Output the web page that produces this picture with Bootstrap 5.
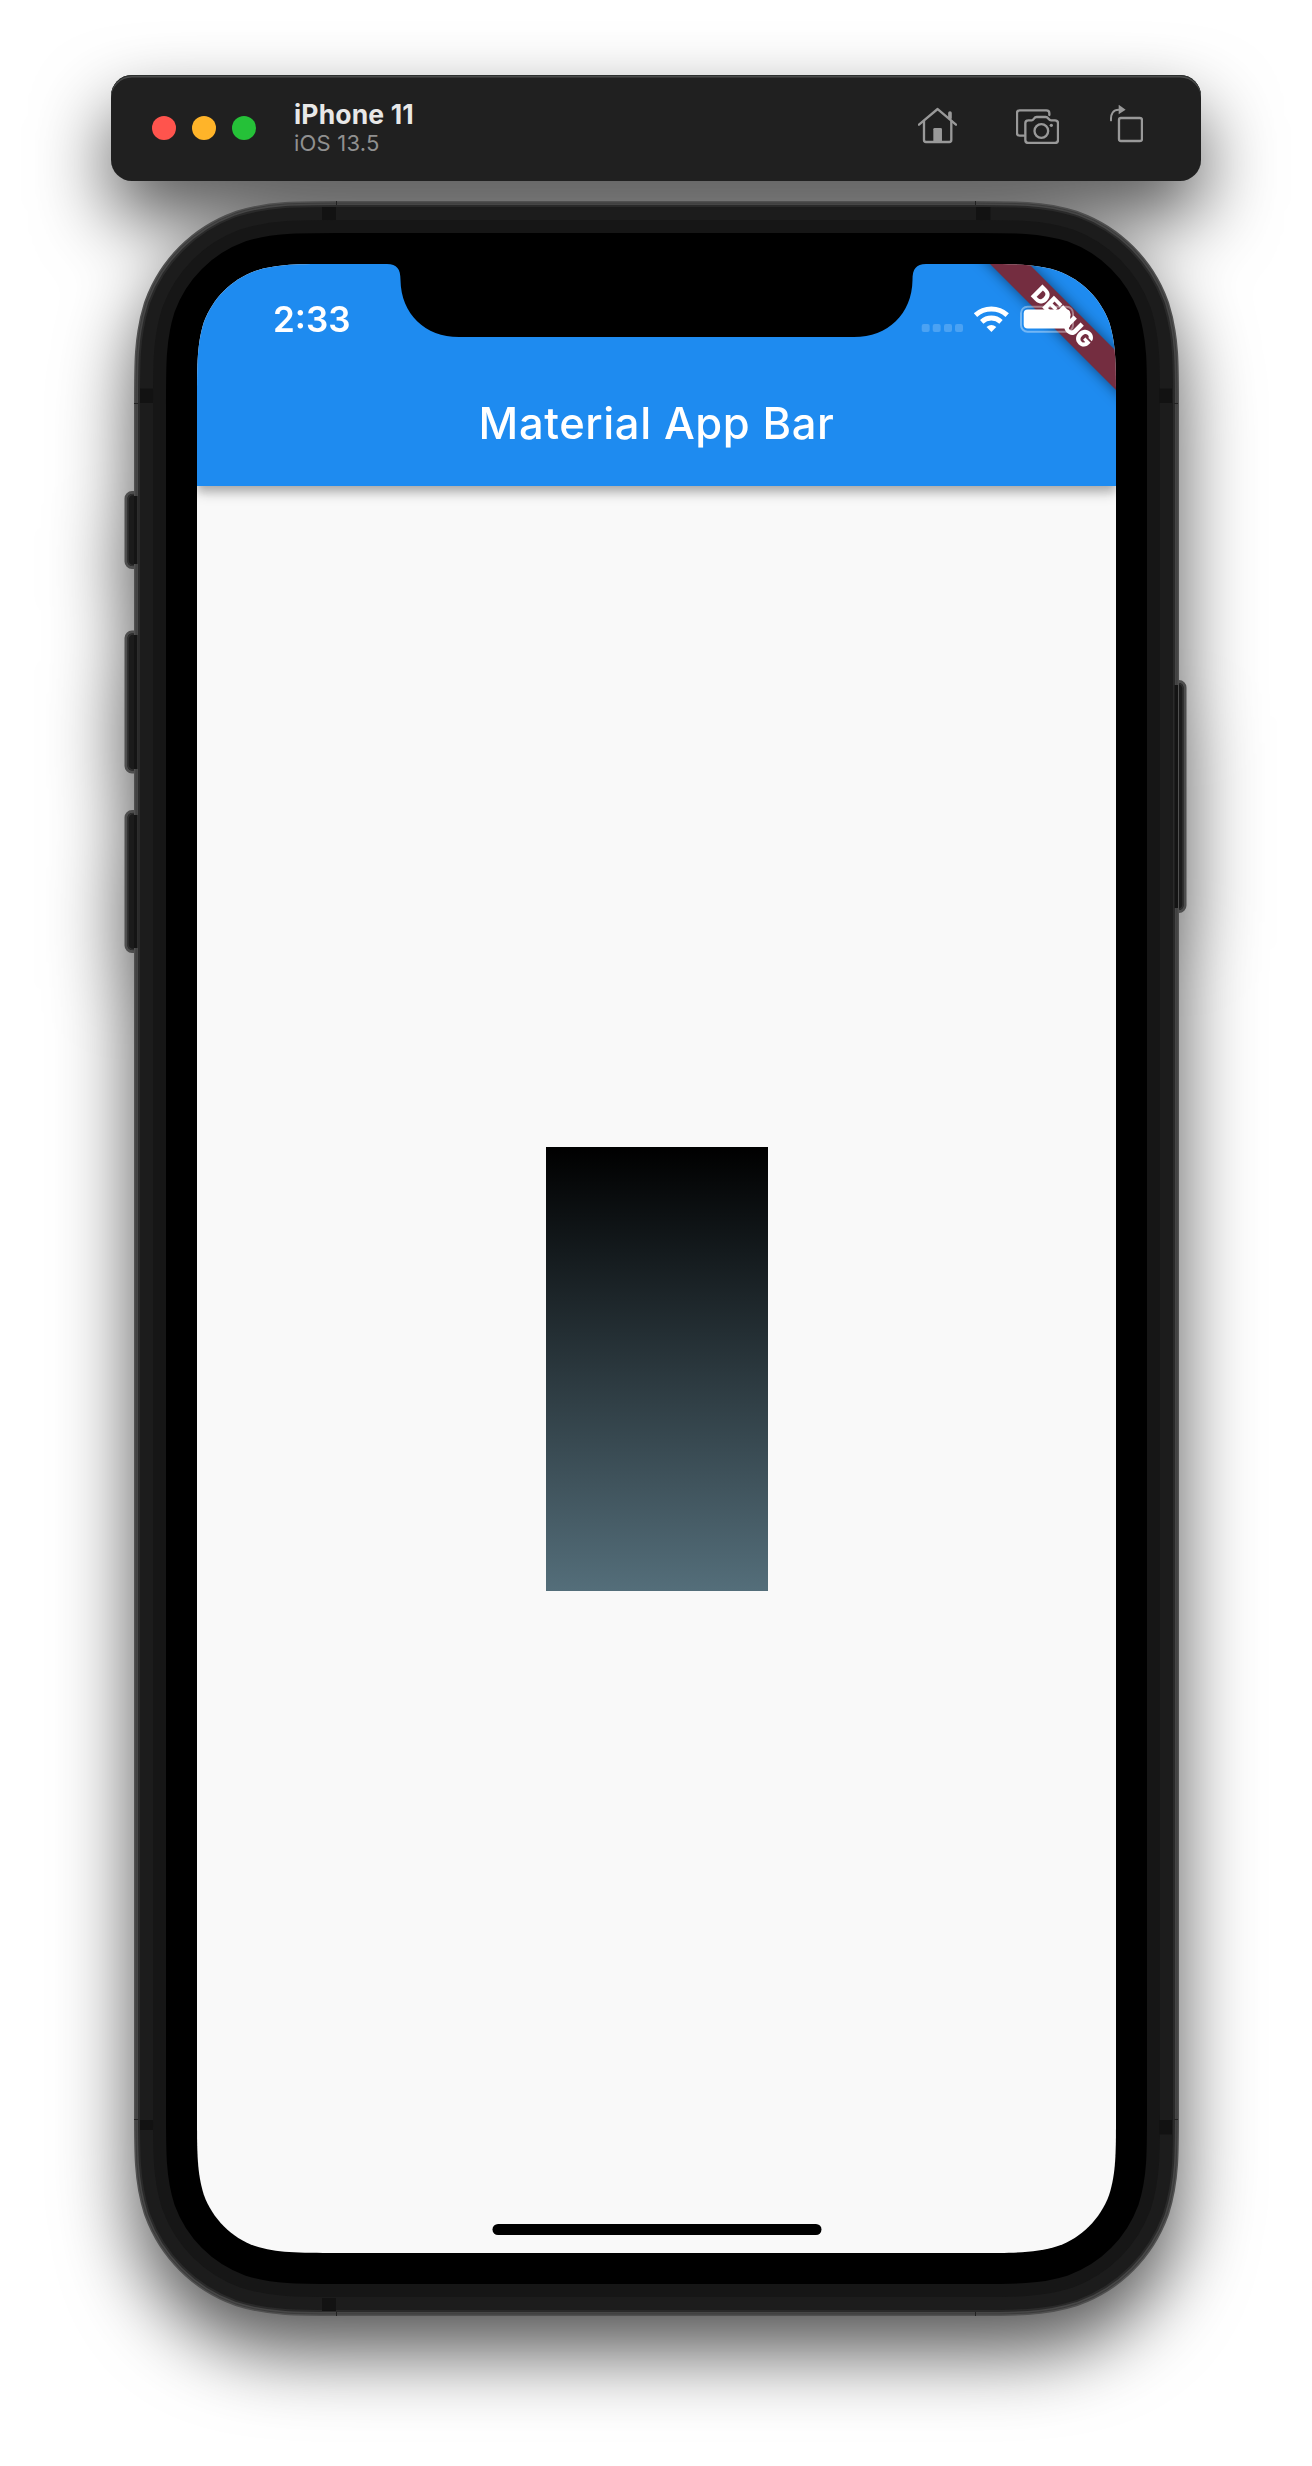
<!DOCTYPE html>
<html lang="en">
<head>
<meta charset="utf-8">
<title>iPhone 11 – iOS 13.5</title>
<meta name="viewport" content="width=device-width, initial-scale=1">
<link rel="stylesheet" href="https://cdn.jsdelivr.net/npm/bootstrap@5.3.0/dist/css/bootstrap.min.css">
<style>
  body { font-family: Inter, Roboto, "Liberation Sans", sans-serif; background: #fff; }
  .stage { width: 1312px; height: 2466px; padding-top: 75px; overflow: hidden; }
  .sim { filter: drop-shadow(0 36px 38px rgba(0,0,0,.67)); }

  .sim-bar { width: 1090px; height: 106px; border-radius: 21px; background: #202020; padding-left: 41px; padding-right: 58px;
    box-shadow: inset 0 1px 0 #2c2f2e, inset 0 2.5px 0 #4a4b4b; }
  .light { width: 24px; height: 24px; border-radius: 50%; }
  .light-close { background: #ff544d; }
  .light-min { background: #ffb429; }
  .light-max { background: #25c138; }
  .sim-title { margin-left: 38px; padding-top: 2px; }
  .sim-name { font-size: 26.5px; line-height: 29px; font-weight: 700; color: #e8e8e8; letter-spacing: .15px; }
  .sim-os { font-size: 22px; line-height: 29px; color: #909090; letter-spacing: .2px; }
  .tools { margin-top: -7px; }
  .tool { height: 39px; fill: none; stroke: #999; stroke-width: 7; stroke-linejoin: round; stroke-linecap: round; display: block; }
  .tool .solid { fill: #999; stroke: none; }

  .phone { width: 1044px; height: 2116px; margin-top: 20px; padding: 63px 62px 64px 63px; }
  .shell { left: -10px; top: 0; width: 1064px; height: 2116px; }
  .screen { width: 919px; height: 1989px; background: #f9f9f9;
    clip-path: path("M140.6 0H778.4C818.9 0 839.1 0 860.9 6.9C884.7 15.6 903.4 34.3 912.1 58.1C919 79.9 919 100.1 919 140.6V1848.4C919 1888.9 919 1909.1 912.1 1930.9C903.4 1954.7 884.7 1973.4 860.9 1982.1C839.1 1989 818.9 1989 778.4 1989H140.6C100.1 1989 79.9 1989 58.1 1982.1C34.3 1973.4 15.6 1954.7 6.9 1930.9C0 1909.1 0 1888.9 0 1848.4V140.6C0 100.1 0 79.9 6.9 58.1C15.6 34.3 34.3 15.6 58.1 6.9C79.9 0 100.1 0 140.6 0Z"); }
  .app-bar { height: 222px; background: #1e8bf0; box-shadow: 0 4px 9px rgba(0,0,0,.2), 0 9px 11px rgba(0,0,0,.13), 0 2px 20px rgba(0,0,0,.08); z-index: 1; }
  .status { height: 98px; padding: 32px 38px 0 76px; color: #fff; }
  .clock { font-size: 35px; line-height: 46px; font-weight: 600; letter-spacing: 0; }
  .status-icons { width: 160px; height: 30px; margin-top: 8px; z-index: 3; }
  .app-title { height: 124px; color: #fff; font-size: 43.5px; font-weight: 500; line-height: 122px; letter-spacing: .6px; }
  .notch { left: 0; top: 0; width: 919px; height: 74px; z-index: 2; }
  .ribbon { right: 0; top: 0; width: 200px; height: 200px; z-index: 1; }
  .ribbon-label { z-index: 4; }
  .ribbon text { font: 900 22.7px Inter, sans-serif; fill: #fff; text-anchor: middle; }
  .gradient-box { width: 222px; height: 444px; margin-top: -1px; background: linear-gradient(#000, #546e7a); }
  .home-pill { width: 329px; height: 11px; border-radius: 5.5px; background: #000; bottom: 18px; }
</style>
</head>
<body>
<div class="stage">
  <div class="sim d-flex flex-column align-items-center">

    <header class="sim-bar d-flex align-items-center">
      <div class="d-flex gap-3">
        <span class="light light-close"></span>
        <span class="light light-min"></span>
        <span class="light light-max"></span>
      </div>
      <div class="sim-title">
        <div class="sim-name">iPhone 11</div>
        <div class="sim-os">iOS 13.5</div>
      </div>
      <div class="tools d-flex ms-auto">
        <svg class="tool" viewBox="114 135 118 117" width="39.3" style="margin-right:58.7px">
          <path d="M117 194 173 147 228 194"/>
          <path d="M132 183V240Q132 246 138 246H208Q214 246 214 240V183"/>
          <path d="M210 159V174" stroke-width="11"/>
          <path class="solid" d="M160 246V208Q160 204 164 204H182Q186 204 186 208V246Z"/>
        </svg>
        <svg class="tool" viewBox="408 135 129 117" width="43" style="margin-right:51px">
          <path d="M432 227H419Q411 227 411 219V159Q411 151 419 151H499Q508 151 508 160V165"/>
          <path d="M444 181H455C462 181 461 171 470 171H497C506 171 505 181 513 181H525Q534 181 534 190V240Q534 249 525 249H445Q436 249 436 240V190Q436 181 445 181"/>
          <circle cx="484" cy="213" r="20.500"/>
          <circle class="solid" cx="514" cy="196" r="5"/>
        </svg>
        <svg class="tool" viewBox="690 135 100 117" width="33.3">
          <path d="M693 181C692 161 700 149 716 149" stroke-width="6"/>
          <path class="solid" d="M716 134 737 149 716 163Z"/>
          <rect x="717" y="174" width="69" height="69" rx="6"/>
        </svg>
      </div>
    </header>

    <main class="phone position-relative">
      <svg class="shell position-absolute" viewBox="-10 0 1064 2116">
        <defs>
          <path id="outline" transform="translate(63 63)" d="M140.6 0H778.4C818.9 0 839.1 0 860.9 6.9C884.7 15.6 903.4 34.3 912.1 58.1C919 79.9 919 100.1 919 140.6V1848.4C919 1888.9 919 1909.1 912.1 1930.9C903.4 1954.7 884.7 1973.4 860.9 1982.1C839.1 1989 818.9 1989 778.4 1989H140.6C100.1 1989 79.9 1989 58.1 1982.1C34.3 1973.4 15.6 1954.7 6.9 1930.9C0 1909.1 0 1888.9 0 1848.4V140.6C0 100.1 0 79.9 6.9 58.1C15.6 34.3 34.3 15.6 58.1 6.9C79.9 0 100.1 0 140.6 0Z"/>
        </defs>
        <!-- side buttons -->
        <g fill="#1b1b1b" stroke="#4e4e4e" stroke-width="3">
          <rect x="-8" y="291.5" width="20" height="75" rx="6"/>
          <rect x="-8" y="431" width="20" height="140" rx="6"/>
          <rect x="-8" y="610.5" width="20" height="140" rx="6"/>
          <rect x="1031" y="480.5" width="20" height="230" rx="6"/>
        </g>
        <g fill="none" stroke="#303030" stroke-width="1.5">
          <rect x="-6" y="293.5" width="20" height="71" rx="5"/>
          <rect x="-6" y="433" width="20" height="136" rx="5"/>
          <rect x="-6" y="612.5" width="20" height="136" rx="5"/>
          <rect x="1029" y="482.5" width="20" height="226" rx="5"/>
        </g>
        <!-- frame rings, outermost first -->
        <g stroke-linejoin="round">
          <use href="#outline" stroke="#505050" stroke-width="126"/>
          <use href="#outline" stroke="#3c3c3c" stroke-width="123"/>
          <use href="#outline" stroke="#464646" stroke-width="121"/>
          <use href="#outline" stroke="#2a2a2a" stroke-width="118"/>
          <use href="#outline" stroke="#1c1c1c" stroke-width="114"/>
          <use href="#outline" stroke="#161616" stroke-width="88"/>
          <use href="#outline" stroke="#000" stroke-width="62" fill="#000"/>
        </g>
        <!-- button faces seated against the frame -->
        <path fill="#141414" d="M0 295h3.500v68H0zM0 434h3.500v134H0zM0 614h3.500v133H0zM1040.500 484h3.500v223h-3.500z"/>
        <!-- antenna bands -->
        <path fill="#121212" d="M188 6h14v13h-14zM842 6h14.500v13h-14.500zM6 187.500h13v14.500h-13zM1025 187.500h13v14.500h-13zM6 1919h13v10h-13zM1025 1919h13v14.500h-13zM188 2097h14v13h-14z"/>
        <path stroke="#222" d="M202.500 0v4M841.500 0v4M0 202.500h4M1040 202.500h4M0 1918.500h4M1040 1918.500h4M202.500 2111v4M841.500 2111v4"/>
      </svg>

      <div class="screen position-relative d-flex flex-column">
        <div class="app-bar position-relative flex-shrink-0">
          <div class="status d-flex justify-content-between align-items-start">
            <div class="clock">2:33</div>
            <svg class="status-icons position-relative" viewBox="918 304 160 30">
              <g fill="#fff" fill-opacity=".2">
                <rect x="921.7" y="324" width="8" height="8" rx="2"/>
                <rect x="932.7" y="324" width="8" height="8" rx="2"/>
                <rect x="944" y="324" width="8" height="8" rx="2"/>
                <rect x="955" y="324" width="8" height="8" rx="2"/>
              </g>
              <g fill="none" stroke="#fff" stroke-width="5">
                <path d="M975.500 315.200A23.500 23.500 0 0 1 1007.200 315.200"/>
                <path d="M981.700 321.800A14.500 14.500 0 0 1 1001 321.800"/>
              </g>
              <path fill="#fff" d="M986.500 327Q991.400 323 996.300 327L991.400 332Z"/>
              <rect x="1021" y="306.700" width="52" height="25" rx="6.500" fill="none" stroke="#fff" stroke-opacity=".38" stroke-width="2"/>
              <rect x="1023.700" y="309.500" width="46.500" height="19" rx="4" fill="#fff"/>
            </svg>
          </div>
          <div class="app-title text-center">Material App Bar</div>

          <svg class="ribbon position-absolute" viewBox="719 0 200 200">
            <defs><filter id="glow" x="-20%" y="-20%" width="140%" height="140%"><feGaussianBlur stdDeviation="7"/></filter></defs>
            <path d="M773-20 939 146V107L812-20Z" fill="#000" fill-opacity=".5" filter="url(#glow)"/>
            <path d="M773-20 939 146V107L812-20Z" fill="#742d40"/>
          </svg>
          <svg class="ribbon ribbon-label position-absolute" viewBox="719 0 200 200">
            <text transform="translate(866 53) rotate(45)" x="0" y="8" textLength="77">DEBUG</text>
          </svg>
        </div>

        <div class="flex-grow-1 d-flex align-items-center justify-content-center">
          <div class="gradient-box"></div>
        </div>

        <svg class="notch position-absolute" viewBox="0 0 919 74">
          <path d="M188 0H190C200 0 203.500 5 203.500 16C204 50 228 73 262 73H657C691 73 715 50 715.500 16C715.500 5 719 0 729 0Z"/>
        </svg>
        <div class="home-pill position-absolute start-50 translate-middle-x"></div>
      </div>
    </main>
  </div>
</div>
<script src="https://cdn.jsdelivr.net/npm/bootstrap@5.3.0/dist/js/bootstrap.bundle.min.js"></script>
</body>
</html>
